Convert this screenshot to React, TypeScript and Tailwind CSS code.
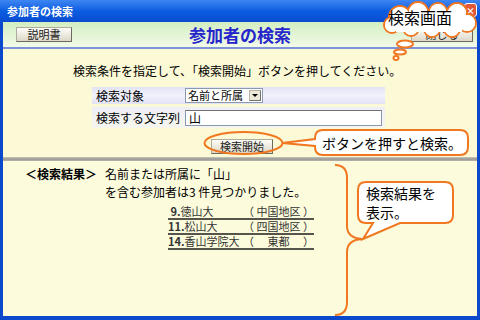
const rows = [
  { no: " 9.", name: "徳山大", area: "（ 中国地区 ）" },
  { no: "11.", name: "松山大", area: "（ 四国地区 ）" },
  { no: "14.", name: "香山学院大", area: "（　 東都　 ）" },
];

const XpButton = ({ label, className }: { label: string; className: string }) => (
  <div
    className={`flex items-center justify-center h-[15px] text-[11px] leading-none text-[#222] bg-gradient-to-b from-[#fdfdf8] to-[#dcd8c8] border border-[#b0ac9c] border-r-[#6e6a5e] border-b-[#6e6a5e] ${className}`}
  >
    {label}
  </div>
);

export default function App() {
  return (
    <div className="relative w-[480px] h-[320px] overflow-hidden bg-[#0a48cc] font-['Noto_Sans_CJK_JP',sans-serif] text-black">
      {/* title bar */}
      <div className="h-[22px] flex items-center px-[7px] bg-gradient-to-b from-[#3d86f2] via-[#0b5ce2] to-[#0a4cd0]">
        <span className="text-[11px] font-bold text-white leading-none">参加者の検索</span>
      </div>

      <div className="mx-[3px] flex flex-col h-[294px]">
        {/* header */}
        <div className="h-[25px] grid grid-cols-[1fr_auto_1fr] items-center px-[13px] bg-gradient-to-b from-[#d2eec2] to-[#f2fae8]">
          <XpButton label="説明書" className="w-[56px]" />
          <span className="text-[17px] font-bold text-[#2626cc] leading-none">参加者の検索</span>
          <div className="flex justify-end">
            <XpButton label="閉じる" className="w-[62px] -mr-[9px]" />
          </div>
        </div>
        <div className="h-[2px] bg-[#7d93d8]" />

        {/* search conditions */}
        <div className="h-[108px] bg-[#fcf9d6] pt-[14px]">
          <p className="pl-[70px] text-[12px] leading-[16px]">
            検索条件を指定して、「検索開始」ボタンを押してください。
          </p>
          <div className="mt-[8px] ml-[89px] w-[293px] flex flex-col gap-[3px]">
            <div className="h-[17px] flex items-center bg-gradient-to-b from-[#e2e2f6] via-[#f2f2fc] to-[#e2e2f6]">
              <span className="w-[93px] pl-[4px] text-[12px] leading-none">検索対象</span>
              <div className="w-[78px] h-[15px] flex items-center justify-between bg-white border border-[#8a98b0] pl-[2px] pr-[1px]">
                <span className="text-[11px] leading-none">名前と所属</span>
                <div className="w-[12px] h-[11px] flex items-center justify-center bg-[#ece9d8] border border-[#b8b4a4] border-r-[#707070] border-b-[#707070]">
                  <div className="w-0 h-0 border-l-[3px] border-r-[3px] border-t-[3px] border-l-transparent border-r-transparent border-t-black" />
                </div>
              </div>
            </div>
            <div className="h-[21px] flex items-center bg-gradient-to-b from-[#eeeef6] to-[#f6f6ee]">
              <span className="w-[93px] pl-[4px] text-[12px] leading-none">検索する文字列</span>
              <div className="flex-1 h-[16px] flex items-center bg-white border border-[#8a98b0] border-t-[#707070] pl-[3px] mr-[3px]">
                <span className="text-[12px] leading-none">山</span>
              </div>
            </div>
          </div>
          <XpButton label="検索開始" className="ml-[208px] mt-[11px] w-[62px] h-[13px]" />
        </div>

        {/* divider */}
        <div className="h-[4px] bg-gradient-to-b from-[#c8c8c0] via-[#9a9a94] to-[#b4b4ac]" />

        {/* results */}
        <div className="flex-1 bg-[#fcfbdc] pt-[4px]">
          <div className="flex text-[12px] leading-[18px]">
            <span className="w-[102px] pl-[22px] font-bold">＜検索結果＞</span>
            <div className="flex flex-col">
              <span>名前または所属に「山」</span>
              <span>を含む参加者は3 件見つかりました。</span>
            </div>
          </div>
          <div className="mt-[4px] ml-[165px] w-[146px] flex flex-col">
            {rows.map((r) => (
              <div key={r.no} className="h-[15px] flex items-center border-b-2 border-[#55554c] text-[11px] leading-none text-[#333]">
                <span className="w-[89px] whitespace-pre">
                  <b>{r.no}</b>
                  {r.name}
                </span>
                <span className="whitespace-pre">{r.area}</span>
              </div>
            ))}
          </div>
        </div>
      </div>

      {/* title bar close button (mostly hidden under the cloud) */}
      <div className="absolute left-[464px] top-[3px] w-[13px] h-[14px] rounded-[3px] bg-[#e0573a] border border-white flex items-center justify-center text-[9px] text-white font-bold leading-none">
        ×
      </div>

      {/* annotations */}
      <svg className="absolute left-0 top-0 w-[480px] h-[320px]" viewBox="0 0 480 320">
        <g stroke="#f07820" strokeWidth="2" fill="none">
          <ellipse cx="243.5" cy="143" rx="39" ry="11" />
          <path d="M335,165 Q347,165 347,178 V226 Q347,238 362,239 Q347,240 347,252 V302 Q347,315 335,315" />
        </g>
        <path
          d="M323,130 H460 Q468,130 468,138 V147 Q468,155 460,155 H323 Q315,155 315,147 V146 L282,143 L315,139 V138 Q315,130 323,130 Z"
          fill="#ffffff"
          stroke="#f07820"
          strokeWidth="2"
        />
        <path
          d="M366,182 H445 Q453,182 453,190 V215 Q453,223 445,223 H400 L363,239 L373,223 H366 Q358,223 358,215 V190 Q358,182 366,182 Z"
          fill="#ffffff"
          stroke="#f07820"
          strokeWidth="2"
        />
        {/* cloud */}
        <g fill="#ffffff" stroke="#f07820" strokeWidth="2">
          <circle cx="400" cy="17" r="11" />
          <circle cx="418" cy="12" r="10" />
          <circle cx="438" cy="12" r="9" />
          <circle cx="457" cy="13" r="10" />
          <circle cx="467" cy="23" r="9" />
          <circle cx="452" cy="29" r="8" />
          <circle cx="432" cy="29" r="8" />
          <circle cx="411" cy="28" r="8" />
          <circle cx="392" cy="25" r="8" />
        </g>
        <g fill="#ffffff">
          <circle cx="400" cy="17" r="10" />
          <circle cx="418" cy="12" r="9" />
          <circle cx="438" cy="12" r="8" />
          <circle cx="457" cy="13" r="9" />
          <circle cx="467" cy="23" r="8" />
          <circle cx="452" cy="29" r="7" />
          <circle cx="432" cy="29" r="7" />
          <circle cx="411" cy="28" r="7" />
          <circle cx="392" cy="25" r="7" />
          <rect x="396" y="12" width="66" height="20" />
        </g>
        <g fill="#ffffff" stroke="#f07820" strokeWidth="2">
          <ellipse cx="405" cy="44" rx="8" ry="3.5" />
          <ellipse cx="400" cy="52" rx="6" ry="2.5" />
          <ellipse cx="396" cy="58" rx="2.5" ry="2" />
        </g>
      </svg>

      <div className="absolute left-[388px] top-[8px] text-[16px] leading-[18px]">検索画面</div>
      <div className="absolute left-[322px] top-[134px] text-[14px] leading-[18px]">ボタンを押すと検索。</div>
      <div className="absolute left-[366px] top-[184px] text-[14px] leading-[19px]">
        検索結果を
        <br />
        表示。
      </div>
    </div>
  );
}
